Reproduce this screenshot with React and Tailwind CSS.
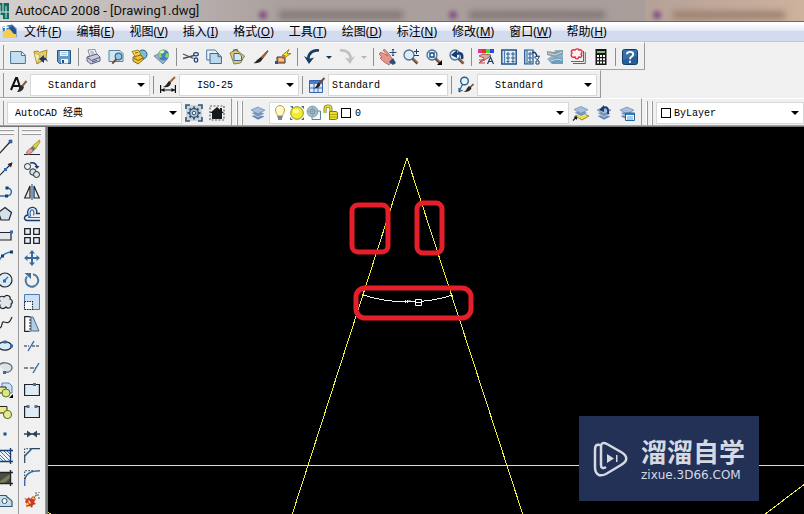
import React from "react";

function Icon({ children, size = "size-4" }) {
  return (
    <svg viewBox="0 0 16 16" className={`${size} shrink-0 overflow-visible`} fill="none" aria-hidden="true">
      {children}
    </svg>
  );
}

const navy = "#173d70";
const blue = "#2f6db0";
const ink = "#20242c";

const brush = (
  <>
    <path d="M15.5 1.5 9 8.2l1.6 1.5L16 2.5z" fill="#a8623a" stroke="#5b2d15" strokeWidth=".6" />
    <path d="M8.9 8 6 10.3C4 12 3.6 13 1.5 14c3.4.6 6.5-.4 7.6-2l1.7-2.3z" fill="#262626" />
  </>
);

const stack = (
  <>
    <path d="m1 11 7 4 7-3.5-7-3z" fill="#6485ae" stroke="#f4f7fb" strokeWidth=".6" />
    <path d="m1 8 7 4 7-3.5-7-3z" fill="#7797bd" stroke="#f4f7fb" strokeWidth=".6" />
    <path d="m1 5 7 4 7-3.8-7-3.2z" fill="#a7bfda" stroke="#5b7ca6" strokeWidth=".6" />
  </>
);

const lens = (
  <>
    <path d="m9.5 9.5 5 5" stroke="#5d4030" strokeWidth="2.6" />
    <path d="m10 9.5 4.5 4.5" stroke="#c99362" strokeWidth="1" />
    <circle cx="6" cy="6" r="5" fill="#dcebf7" stroke="#4b7194" strokeWidth="1.3" />
  </>
);

const art = {
  new: (
    <path d="M.6 2.5h11l3.8 3.8v8.2H.6zM11.4 2.5v4h4" fill="#c5dff0" stroke="#46789f" strokeWidth="1" />
  ),
  open: (
    <>
      <path d="M1 2.5 5 2l1.5 1.5L14 1l-1 9-9 5z" fill="#e9cf62" stroke="#8d7527" strokeWidth=".8" />
      <path d="m1 3.5 6 3L4 15z" fill="#f8eba6" stroke="#a38931" strokeWidth=".6" />
      <path d="m6 10 5-4v2.5c2 0 3 2 4 4.5-2-2-3-2-4-2V14z" fill={navy} />
    </>
  ),
  save: (
    <>
      <path d="M1.5 1.5h13v13h-11l-2-2z" fill="#669bc8" stroke="#285783" />
      <path d="M4 2h8v5H4zM5 10h7v4.5H5z" fill="#edf5fb" />
      <path d="M5 3.5h6M5 5.5h6" stroke="#8caac5" strokeWidth=".7" />
      <path d="M6 11h2v3H6z" fill="#244e7a" />
    </>
  ),
  print: (
    <>
      <path d="m3 1 7-.5 2 6-7 1.5z" fill="#fff" stroke="#686d91" strokeWidth=".8" />
      <path d="M5 3h4M5.5 5H10" stroke="#858ab0" />
      <path d="m2 8 10-3 3 3v4l-9 3-4-3z" fill="#c9cbdf" stroke="#4e5377" strokeWidth=".9" />
      <path d="m2.5 8.5 4 3 8-3M7 13l5-1.6" stroke="#4e5377" />
    </>
  ),
  preview: (
    <>
      <path d="M1 1.5h11l3 3v8H1z" fill="#d1e6f3" stroke="#5684a5" />
      <path d="m8.3 10.3-4 4.3" stroke="#704b35" strokeWidth="2" />
      <circle cx="10.5" cy="7.5" r="3.3" fill="#9ac5e5" stroke="#35698f" strokeWidth="1.2" />
    </>
  ),
  publish: (
    <>
      <circle cx="11.5" cy="5.5" r="4.5" fill="#80bad5" stroke="#245d85" />
      <path d="M1 2.5 7 1l3 4-5 4z" fill="#f6d44c" stroke="#8a6c11" strokeWidth=".8" />
      <path d="m2 8 8-2 3 4-6 5-5-3z" fill="#efc432" stroke="#76601b" strokeWidth=".9" />
      <path d="m3 9 4 2.5 5-2.5M4 4l3-.5" stroke="#58460d" strokeWidth=".8" />
    </>
  ),
  web: (
    <>
      <path d="m0 7 6-3 8 5-5 6z" fill="#9db4cf" stroke="#506b91" strokeWidth=".7" />
      <circle cx="9.5" cy="6" r="5.5" fill="#3c82c4" />
      <path d="M5 3c2-2 4-3 6-2l-1 3-3 1 1 3-3 1C4 6 4 5 5 3zM12 4l3 1-1 4-3-1z" fill="#9ccd5d" />
      <ellipse cx="8" cy="3" rx="2" ry="1.2" fill="#f3fbe2" opacity=".8" />
    </>
  ),
  cut: (
    <>
      <path d="m0 5 10.5 4.5M0 9.5 11 6.5" stroke="#48515f" strokeWidth="1.3" />
      <ellipse cx="13" cy="5.3" rx="2.3" ry="1.6" stroke="#253f72" strokeWidth="1.2" />
      <ellipse cx="13" cy="11" rx="1.7" ry="2.2" stroke="#253f72" strokeWidth="1.2" />
    </>
  ),
  copy: (
    <>
      <path d="M.7 1h8.5L12 4v7H.7z" fill="#e6f1f8" stroke="#4d7ca3" />
      <path d="M4 4.5h8l3.4 3.2v6.8H4zM12 4.5v3.2h3.4" fill="#bddaed" stroke="#376b95" />
    </>
  ),
  paste: (
    <>
      <path d="M1 4 7 .8 15.5 7l-4 7L5 15z" fill="#ddcc77" stroke="#87752f" strokeWidth=".9" />
      <path d="m4 2.8 1-2 3-.3 1 2" stroke="#697384" strokeWidth="1.3" />
      <path d="M5 4.5h5l2.5 2.3v4.7H5z" fill="#d4e8f4" stroke="#3a6893" />
    </>
  ),
  brush,
  blockedit: (
    <>
      <path d="M2 8h8v6H2z" fill="#f2904e" stroke="#353535" />
      <path d="M4 9h5v3H4z" fill="#ffc296" />
      <path d="M14 .5 7 6.5h3L7.5 10 16 4.5h-4z" fill="#ffdf31" stroke="#8d6e09" strokeWidth=".8" />
      <path d="M0 12h3v3H0z" fill="#125ca5" />
    </>
  ),
  undo: (
    <>
      <path d="M15 1.5C9 .5 4.5 4 4.2 10" stroke="#173c66" strokeWidth="2.7" />
      <path d="m0 7 5 8 5-6.5-4.5 1.2z" fill="#173c66" />
    </>
  ),
  redo: (
    <>
      <path d="M1 1.5C7 .5 11.5 4 11.8 10" stroke="#c1c1c1" strokeWidth="2.7" />
      <path d="m16 7-5 8-5-6.5 4.5 1.2z" fill="#c1c1c1" />
    </>
  ),
  pan: (
    <>
      <path d="m1 3 7 4-5-6 2-.5 5 5.500 3 6-4 4-5-3-4-4 2-1-3-3z" fill="#e6958a" stroke="#9e554f" strokeWidth=".7" />
      <path d="m9 13 4-4 3 5-3 2z" fill="#2b4f7d" />
      <path d="M13 0v7M9.5 3.5h7M12 1.2 13 0l1 1.2M12 5.8 13 7l1-1.2" stroke="#234d79" />
    </>
  ),
  zoom: (
    <>
      {lens}
      <path d="M13.5 0v5M11 2.5h5M11 6.5h5" stroke={navy} />
    </>
  ),
  zoomwin: (
    <>
      {lens}
      <path d="M4 4h4v4H4z" fill="#fff" stroke="#174d88" strokeWidth="1.4" />
      <path d="M16 11v5h-5z" fill="#000" />
    </>
  ),
  zoomprev: (
    <>
      {lens}
      <path d="M13 10c1-5-1-7-5-5" stroke={navy} strokeWidth="2.5" />
      <path d="m2 6 6-5v8z" fill={navy} />
    </>
  ),
  properties: (
    <>
      <path d="M0 0h4v4H0z" fill="#ed2ca7" />
      <path d="M4 0h4v4H4z" fill="#f12c25" />
      <path d="M8 0h4v4H8z" fill="#49df39" />
      <path d="M12 0h4v4h-4z" fill="#2a46e3" />
      <path d="m1 7 4-2 8 1-3 3-9 5 5-5z" fill="#eaa49b" stroke="#7d3939" strokeWidth=".7" />
      <path d="M1 11h6M1 14h6" stroke="#ce3847" strokeWidth="1.2" />
      <path d="m9.5 15 3-7 3 7M10.5 12.5h4" stroke={navy} strokeWidth="1.2" />
    </>
  ),
  center: (
    <>
      <path d="M.8 1h14.4v14H.8z" fill="#e2effb" stroke="#1d5285" strokeWidth="1.4" />
      <path d="M3.5 1.5v13" stroke="#4f7fac" strokeWidth="1.2" />
      <path d="M6 4h2v2H6zM11 4h2v2h-2zM6 8h2v2H6zM11 8h2v2h-2zM6 12h2v1H6zM11 12h2v1h-2z" stroke="#214f7b" strokeWidth=".9" />
    </>
  ),
  palettes: (
    <>
      <path d="M.7 1H9v14H.7z" fill="#d9eafa" stroke="#1d5285" strokeWidth="1.2" />
      <path d="M3 1v14M5 4h2v2H5zM5 8h2v2H5zM5 12h2v2H5z" stroke="#315f8e" />
      <path d="M8 4c3-2 5 1 5 5" stroke={navy} strokeWidth="1.5" />
      <path d="m10.5 8 3 3 2-4zM12 12h3v3h-3z" fill="#fff" stroke={navy} />
    </>
  ),
  sheets: (
    <>
      <path d="M8 1h8v14H5L0 10l6-4z" fill="#8fb3c8" />
      <path d="m0 2 7 1 9-2v4L8 8 0 6z" fill="#8d9ba4" />
      <path d="m3 12 6-4 7 1v6H5z" fill="#6d9fbd" />
      <path d="m1 4 7 2 7-3M4 12l6-2 5 1" stroke="#dfe9ee" strokeWidth=".8" />
    </>
  ),
  markup: (
    <>
      <path d="M3 14.5h12.3V3M1 12.5h12.5V2" stroke="#536879" />
      <path d="M2 4c-2-2 1-4 3-3 2-2 4-1 4 0 3-1 4 2 2 4 2 2 0 4-2 3-1 3-4 2-4 0C2 9 0 7 2 4z" fill="#fff1f2" stroke="#e02f49" strokeWidth="1.4" />
    </>
  ),
  calc: (
    <>
      <path d="M2.5 0h11v16h-11z" fill="#161616" />
      <path d="M4 2h8v2H4z" fill="#85bb76" />
      <path d="M4 6h2v2H4zM7 6h2v2H7zM10 6h2v2h-2zM4 9.3h2v2H4zM7 9.3h2v2H7zM10 9.3h2v2h-2zM4 12.6h2v2H4zM7 12.6h2v2H7zM10 12.6h2v2h-2z" fill="#fff" />
    </>
  ),
  help: (
    <>
      <rect x=".5" y=".5" width="15" height="15" rx="2" fill="#245f9c" stroke="#143b67" />
      <path d="M1 1h14v6L1 11z" fill="#417bb0" opacity=".6" />
      <path d="M5 5.2C5 2.2 11.2 2 11.2 5.4 11.2 7.6 8 7.6 8 10.2M8 11.7v2" stroke="#fff" strokeWidth="1.9" />
    </>
  ),
  textstyle: (
    <>
      <path d="m0 13 5-12h1l4 12M2 9h6" stroke="#111" strokeWidth="2" />
      <path d="m15.5 4-5 6" stroke="#8b5b3b" strokeWidth="2" />
      <path d="m10 8 3 2c-1 4-4 5-7 5 2-2 2-5 4-7z" fill="#2b2b2b" />
    </>
  ),
  dimstyle: (
    <>
      <path d="M.6 8v8M15.4 8v8M1 13h14" stroke="#111" strokeWidth="1.2" />
      <path d="m1 13 3.5-2v4zm14 0-3.5-2v4z" fill="#111" />
      <path d="m15 0-6 6" stroke="#a0653e" strokeWidth="2" />
      <path d="m9 4 2 2c-1 4-4 5-8 4 3-1 4-4 6-6z" fill="#242424" />
    </>
  ),
  tablestyle: (
    <>
      <path d="M.5 3.5h13v12H.5z" fill="#dce9fd" stroke="#3265ae" />
      <path d="M1 4h12v3H1z" fill="#4a7acb" />
      <path d="M1 11h12M5 7v8M9 7v8" stroke="#3e70b8" />
      <path d="m15.5 1-6 6" stroke="#744b2e" strokeWidth="2" />
      <path d="m9.5 5.5 2 2c-1 3-4 4-7 4 3-1 3-4 5-6z" fill="#222" />
    </>
  ),
  leaderstyle: (
    <>
      <circle cx="6.5" cy="4" r="3.8" fill="#e9f3fb" stroke="#255f91" strokeWidth="1.4" />
      <path d="M4.5 7.5 1.2 14M1 15v-4M1 15l3.5-2" stroke="#255f91" strokeWidth="1.2" />
      <path d="m15.5 7-4 4" stroke="#755034" strokeWidth="1.7" />
      <path d="m11 9 2.5 2c-1 3-4 4-8 4 3-1 3-4 5.5-6z" fill="#2a2a2a" />
    </>
  ),
  gear: (
    <>
      <path d="M0 0h16v16H0z" fill="#90a9bc" opacity=".4" />
      <path d="M0 4V0h4M12 0h4v4M0 12v4h4M12 16h4v-4" stroke="#315574" strokeWidth="1.6" />
      <path d="M8 1.5v13M1.5 8h13M3.500 3.500l9 9M12.500 3.500l-9 9" stroke="#375a7c" strokeWidth="2" />
      <circle cx="8" cy="8" r="4.3" fill="#b8cada" stroke="#31516f" strokeWidth="1.3" />
      <circle cx="8" cy="8" r="1.8" fill="#f7f9fb" stroke="#31516f" />
    </>
  ),
  house: (
    <>
      <path d="M1 1h14v14H1z" stroke="#57636c" strokeWidth="1.2" strokeDasharray="2 1.5" />
      <path d="M1 8 8 2l7 6h-2v6H3V8z" fill="#171a1c" />
      <path d="M11 3h2v4h-2z" fill="#171a1c" />
    </>
  ),
  layers: stack,
  bulb: (
    <>
      <path d="M5.500 11c0-2-2-3-2-6a4.500 4.500 0 0 1 9 0c0 3-2 4-2 6z" fill="#fffaca" stroke="#b8a12f" />
      <path d="M5.5 12h5M6 14h4" stroke="#596072" strokeWidth="1.5" />
      <path d="M6 4c0-1 1-1.5 2-1.5" stroke="#fff" strokeWidth="1.5" />
    </>
  ),
  sun: (
    <>
      <path d="M1 1h3v3zM15 1v3l-3-3zM1 15v-3l3 3zM15 15h-3l3-3z" fill="#4c6a80" />
      <circle cx="8" cy="8" r="6.3" fill="#f4ec27" stroke="#8a902c" />
      <ellipse cx="7" cy="6" rx="3" ry="2.3" fill="#fffca0" />
    </>
  ),
  viewport: (
    <>
      <path d="M6 6h8.500v8.500H6z" fill="#f3f8fb" stroke="#59819b" />
      <circle cx="6.500" cy="6.500" r="5.400" fill="#a6bdc5" stroke="#7f9ba6" />
      <circle cx="6.500" cy="6.500" r="2.500" stroke="#6f909f" />
      <path d="M6.500 2v9M2 6.500h9" stroke="#86a3b0" strokeWidth=".8" />
    </>
  ),
  lock: (
    <>
      <path d="M2 8V4c0-4 6-4 6 0v3" stroke="#827c15" strokeWidth="3" />
      <path d="M2 8V4c0-4 6-4 6 0v3" stroke="#f1e94a" strokeWidth="1.3" />
      <path d="M6.500 6.500h6.500l1.500 1v6l-2 1h-6z" fill="#e9df27" stroke="#7d7a19" />
      <path d="M7 9.500h7M7 12h7" stroke="#b4aa15" />
    </>
  ),
  layercurrent: (
    <>
      <path d="m2 11 7 4 7-4-7-3z" fill="#e9d94b" stroke="#86791c" strokeWidth=".8" />
      <path d="m1 7.500 7 4 7-3.500-7-3z" fill="#7797bd" stroke="#f4f7fb" strokeWidth=".6" />
      <path d="m1 4.500 7 4 7-3.800-7-3.200z" fill="#a7bfda" stroke="#5b7ca6" strokeWidth=".6" />
      <path d="m0 15.500 3.500-3.500M1 12h2.500v2.500" stroke="#111" strokeWidth="1.1" />
    </>
  ),
  layerprev: (
    <>
      {stack}
      <path d="M12 9c1-5-1-8-5-6" stroke={navy} strokeWidth="2" />
      <path d="m3 5 5-5v7z" fill={navy} />
    </>
  ),
  layerstates: (
    <>
      {stack}
      <path d="M6.5 8h9v7.5h-9z" fill="#f8fbff" stroke="#1d65a5" />
      <path d="M7 8h8v2H7z" fill="#337ab9" />
      <path d="M8 12h6M8 14h6" stroke="#6898c5" />
    </>
  ),
  line: (
    <>
      <path d="M1 15 13 2" stroke={ink} strokeWidth="1.2" />
      <path d="M12 0h3v3h-3z" fill={blue} stroke={navy} strokeWidth=".5" />
    </>
  ),
  xline: (
    <>
      <path d="M1 15 15 1" stroke={ink} strokeWidth="1.2" />
      <path d="m15.5.5-1.5 5L10.500 2z" fill={ink} />
      <path d="M7 6h3v3H7z" fill={blue} />
    </>
  ),
  pline: (
    <>
      <path d="M1 12h8c7 0 7-8 1-8" stroke={blue} strokeWidth="1.5" />
      <path d="M8.5 2.5h3v3h-3zM8 10.5h3v3H8z" fill={navy} />
    </>
  ),
  polygon: <path d="M8 1.5 14.500 6.500 12 14H4L1.500 6.500z" fill="#d3e1eb" stroke={ink} strokeWidth="1.2" />,
  rect: (
    <>
      <path d="M0 4.500h14V12H0z" fill="#e1e7ed" stroke={ink} strokeWidth="1.2" />
      <path d="M13 2.500h3v3h-3zM0 11h3v3H0z" fill={blue} />
    </>
  ),
  arc: (
    <>
      <path d="M1 16C1 9 7 2 15 2" stroke={blue} strokeWidth="1.4" />
      <path d="M13 .5h3v3h-3zM4 4.500h3v3H4z" fill={navy} />
    </>
  ),
  circle: (
    <>
      <circle cx="8" cy="8" r="7" fill="#dcecf5" stroke={ink} strokeWidth="1.2" />
      <path d="m7 9 4-4" stroke={blue} strokeWidth="1.3" />
      <path d="M6 7.500h3v3H6z" fill={blue} />
    </>
  ),
  cloud: (
    <path d="M3 7c-3-3 1-6 4-4 3-3 7-1 6 2 3 1 3 4 1 5 1 4-3 5-5 3-3 3-7 1-6-2-2-1-2-3 0-4z" fill="#dee5eb" stroke={ink} strokeWidth="1.2" />
  ),
  spline: <path d="M0 13c8-1 3-8 7-7 4 1 5 2 8-5" stroke={ink} strokeWidth="1.2" />,
  ellipse: (
    <>
      <ellipse cx="8" cy="8" rx="6.5" ry="4.2" fill="#d6ecf7" stroke={ink} strokeWidth="1.3" />
      <path d="M13 6.500h3v3h-3zM6.500 2.500h3v3h-3z" fill={blue} />
    </>
  ),
  earc: (
    <>
      <path d="M2 5c4-4 13-2 13 3 0 3-4 5-7 4" fill="#dce2e8" stroke="#6a7481" strokeWidth="1.4" />
      <path d="M6 11h3v3H6z" fill={blue} />
    </>
  ),
  insert: (
    <>
      <path d="M5 1h7l3 3v7H5z" fill="#cce0f1" stroke="#5b81ad" />
      <path d="M0 5h9v6H0z" fill="#ebe695" stroke={ink} />
      <circle cx="9" cy="11" r="4" fill="#d9e785" stroke="#5c7523" />
      <path d="M16 12v4h-4z" fill="#000" />
    </>
  ),
  make: (
    <>
      <path d="M1 2.500h9V9H1z" fill="#f1e87f" stroke={ink} />
      <circle cx="10.500" cy="10.500" r="4" fill="#e5ea98" stroke="#68782f" strokeWidth="1.2" />
      <path d="M0 8h3v3H0z" fill={blue} />
    </>
  ),
  point: <path d="M6.500 6.500h3v3h-3z" fill="#164f8b" />,
  hatch: (
    <>
      <path d="M2 2h11v11H2z" fill="#eff6fb" />
      <path d="M3 3l10 10M3 7l6 6M7 3l6 6M3 10l3 3M10 3l3 3" stroke="#4476a0" />
      <path d="M2 0v16M13.500 0v16M0 2.500h16M0 13.500h16" stroke={navy} strokeWidth="1.4" />
    </>
  ),
  gradient: (
    <>
      <path d="M2 2h12v12H2z" fill="#4a5045" />
      <path d="m2 12 11-8v4l-7 6H2z" fill="#7d7d55" />
      <path d="M2 0v16M13.500 0v16M0 2.500h16M0 13.500h16" stroke={ink} strokeWidth="1.4" />
    </>
  ),
  region: (
    <>
      <path d="M1 3.500h8c1 3 5 3 6 6v5H1z" fill="#c6ddec" stroke="#34556e" strokeWidth="1.2" />
      <circle cx="7.500" cy="9" r="2.500" fill="#fff" stroke="#34556e" />
    </>
  ),
  erase: (
    <>
      <path d="M0 14.500h16" stroke={ink} />
      <path d="m15.500 0-7 6 3 3 4.500-7z" fill="#e7cf38" stroke="#796716" strokeWidth=".6" />
      <path d="m8.500 6-2 2 3 3 2-2z" fill="#5f7e67" />
      <path d="m6.500 8-4 4c0 2 2 3 3 2l4-3z" fill="#ea9f9d" stroke="#8b4848" strokeWidth=".7" />
    </>
  ),
  duplicate: (
    <>
      <circle cx="3.500" cy="4.500" r="3" stroke={ink} />
      <circle cx="9" cy="10" r="3.200" fill="#dce4eb" stroke={ink} />
      <circle cx="12.500" cy="12.500" r="3" fill="#dce4eb" stroke={ink} />
      <path d="M6 1c4-1 6 0 7 4" stroke={navy} strokeWidth="1.6" />
      <path d="M10.500 4h5L13 7z" fill={navy} />
    </>
  ),
  mirror: (
    <>
      <path d="M6 2v12H.7zM10 2v12h5.300z" fill="#e4e9ed" stroke={ink} strokeWidth="1.2" />
      <path d="M8 0v16" stroke={blue} strokeWidth="1.3" />
    </>
  ),
  offset: (
    <>
      <path d="M16 14.500H3c-4-1-3-5 1-5.500C1-1 15-1 12.500 7.500H16" stroke={navy} strokeWidth="1.3" />
      <path d="M16 11.500H5c-1 0-1-1 1.500-1.500C4 2 12 2 9.500 9.500" stroke={blue} strokeWidth="1.2" />
    </>
  ),
  array: <path d="M.7.7h5.600v5.600H.7zM9.700.7h5.600v5.600H9.700zM.7 9.700h5.600v5.600H.7zM9.700 9.700h5.600v5.600H9.700z" fill="#e5edf4" stroke={ink} strokeWidth="1.3" />,
  move: <path d="m8 0 3 3.500H9V7h3.500V5L16 8l-3.500 3V9H9v3.500h2L8 16l-3-3.500h2V9H3.500v2L0 8l3.500-3v2H7V3.500H5z" fill="#3a6b9f" />,
  rotate: (
    <>
      <path d="M9 2.200a6.300 6.300 0 1 1-6 2.300" stroke="#4b789f" strokeWidth="2" />
      <path d="M.5 1H7v6z" fill="#416d98" />
    </>
  ),
  scale: (
    <>
      <path d="M.5.5h15v15H.5z" fill="#cee0f5" stroke="#4e7aac" />
      <path d="M.5 7.500h8v8h-8z" fill="#f8fafc" stroke={ink} strokeWidth="1.1" strokeDasharray="1.500 1" />
    </>
  ),
  stretch: (
    <>
      <path d="M5.500.7H.7v14.600h4.800" fill="#fff" stroke={ink} strokeWidth="1.2" />
      <path d="M7 1h2l6 14H7z" fill="#b5cce3" stroke="#436d94" />
      <path d="M6 0v16" stroke={ink} strokeDasharray="2 1" />
    </>
  ),
  trim: (
    <>
      <path d="M0 8h5M8 8h8" stroke={ink} strokeWidth="1.2" strokeDasharray="3 1" />
      <path d="m4 13 6-10" stroke={blue} strokeWidth="1.4" />
    </>
  ),
  extend: (
    <>
      <path d="M0 8h5M6 8h6" stroke={ink} strokeWidth="1.2" strokeDasharray="4 1" />
      <path d="m9 13 6-10" stroke={blue} strokeWidth="1.4" />
    </>
  ),
  breakpoint: (
    <>
      <path d="M.6 2.500h14.800v11H.6z" fill="#dfebf5" stroke={ink} strokeWidth="1.2" />
      <path d="M9 1h3v3H9z" fill="#51728f" />
    </>
  ),
  break: (
    <>
      <path d="M4 2.500H.6v11h14.800v-11H12" fill="#dfebf5" stroke={ink} strokeWidth="1.2" />
      <path d="M2.500 1h3v3h-3zM10.500 1h3v3h-3z" fill="#51728f" />
    </>
  ),
  join: (
    <>
      <path d="M0 8h16" stroke={ink} strokeWidth="1.3" />
      <path d="m3 4.500 5 3.500-5 3.500zM13 4.500 8 8l5 3.500z" fill="#27455f" />
    </>
  ),
  chamfer: (
    <>
      <path d="M.7 15V8l7-7.300H16" stroke="#27455f" strokeWidth="1.2" />
      <path d="M.7 8V.7h7" stroke={ink} strokeDasharray="1.500 1.500" />
      <path d="m.7 8 7-7" stroke={blue} strokeWidth="1.4" />
    </>
  ),
  fillet: (
    <>
      <path d="M.7 16v-5C1 4 6 .7 16 .7" stroke={blue} strokeWidth="1.4" />
      <path d="M.7 9V.7h9" stroke={ink} strokeDasharray="1.500 1.500" />
    </>
  ),
  explode: (
    <>
      <path d="m0 6 3 1 2-2 1 2 3-3 3 3-2 3 2 2-3 1-1 3-2-2-4 1 1-3-2-2 1-2z" fill="#c93a22" />
      <path d="m1 13 3-3 1 3zM7 6l3-1 1 3z" fill="#ffc43b" />
      <path d="m4 8 2 1 1 3-2-1z" fill="#f6d9b4" />
      <path d="m10 6 2-3h3M12 0v2M15 0v1M15 5v2" stroke="#4b5863" />
    </>
  ),
};

function Tool({ name, width = "w-[23px]" }) {
  return (
    <button type="button" aria-label={name} className={`flex h-[22px] ${width} shrink-0 items-center justify-center`}>
      <Icon>{art[name]}</Icon>
    </button>
  );
}

function Caret() {
  return (
    <svg viewBox="0 0 8 4" className="h-1 w-2 shrink-0 fill-black" aria-hidden="true">
      <path d="M0 0h8L4 4z" />
    </svg>
  );
}

function Separator() {
  return <div className="ml-[3px] mr-[2px] h-[18px] w-px shrink-0 bg-[#8e8e8e]" />;
}

function Grip() {
  return (
    <div className="mr-[3px] flex h-6 shrink-0 gap-[3px]">
      <div className="w-[2px] border-r border-[#999] bg-white" />
      <div className="w-[2px] border-r border-[#999] bg-white" />
    </div>
  );
}

function Bar({ children, className = "" }) {
  return (
    <div className={`flex h-7 items-center border-b border-t border-b-[#a3a3a3] border-t-white pt-[2px] ${className}`}>
      {children}
    </div>
  );
}

const mono = "font-['Liberation_Mono','Noto_Sans_CJK_SC',monospace]";

function Combo({ label, value, width, pad = "pl-[18px]", before = null }) {
  return (
    <div className={`relative flex h-[22px] items-center border border-[#d8d8d8] bg-white ${width}`}>
      {before}
      <select
        aria-label={label}
        defaultValue={value}
        className={`h-full min-w-0 flex-1 appearance-none bg-transparent text-[10px] text-black ${mono} ${pad} pr-4`}
      >
        <option>{value}</option>
      </select>
      <span className="pointer-events-none absolute right-1 flex">
        <Caret />
      </span>
    </div>
  );
}

const menus = [
  ["文件", "F"], ["编辑", "E"], ["视图", "V"], ["插入", "I"], ["格式", "O"], ["工具", "T"],
  ["绘图", "D"], ["标注", "N"], ["修改", "M"], ["窗口", "W"], ["帮助", "H"],
];

const drawTools = [
  "line", "xline", "pline", "polygon", "rect", "arc", "circle", "cloud", "spline",
  "ellipse", "earc", "insert", "make", "point", "hatch", "gradient", "region",
];

const modifyTools = [
  "erase", "duplicate", "mirror", "offset", "array", "move", "rotate", "scale", "stretch",
  "trim", "extend", "breakpoint", "break", "join", "chamfer", "fillet", "explode",
];

function TitleBar() {
  return (
    <header className="flex h-[21px] items-center overflow-hidden bg-linear-to-r from-[#d4d0ce] from-0% via-[#aaa09e] via-35% to-[#a99c99]">
      <svg viewBox="0 0 10 16" className="ml-[-1px] h-4 w-[10px] shrink-0" aria-hidden="true">
        <path d="M0 0h10v16H0z" fill="#17695f" />
        <path d="M1 2v10M4 0v9M7 3v12M0 9h10" stroke="#cdeee4" strokeWidth="1" />
        <path d="M0 12h4v4H0z" fill="#b7d9cf" />
      </svg>
      <h1 className="ml-[6px] w-[194px] shrink-0 whitespace-nowrap font-[Roboto,'Noto_Sans_CJK_SC',sans-serif] text-[13px] leading-4 text-[#111]">
        AutoCAD 2008 - [Drawing1.dwg]
      </h1>
      <div className="ml-[50px] flex h-full flex-1 items-center" aria-hidden="true">
        <div className="mt-2 size-2 shrink-0 rounded-full bg-[#80517f] blur-[2px]" />
        <div className="ml-3 mt-2 h-2 w-[124px] shrink-0 bg-[#827876] blur-[3px]" />
        <div className="ml-[46px] mt-2 size-2 shrink-0 rounded-full bg-[#80517f] blur-[2px]" />
        <div className="ml-3 mt-2 h-2 w-[136px] shrink-0 bg-[#827876] blur-[3px]" />
        <div className="ml-10 flex h-full flex-1 items-center bg-linear-to-r from-[#b5a198] to-[#cdb29d]">
          <div className="ml-2 mt-2 size-2 shrink-0 rounded-full bg-[#80517f] blur-[2px]" />
          <div className="ml-3 mt-2 h-2 w-[112px] shrink-0 bg-[#9c8170] blur-[3px]" />
        </div>
      </div>
    </header>
  );
}

function MenuBar() {
  return (
    <nav className="flex h-[21px] items-center gap-[15px] border-b border-t border-b-[#c4c7d2] border-t-[#6d686a] bg-linear-to-b from-white from-10% via-[#e6eaf6] via-45% to-[#d3dbee] to-50% pl-[2px] font-['Noto_Sans','Noto_Sans_CJK_SC',sans-serif] text-[12px] leading-4 text-black">
      <svg viewBox="0 0 16 16" className="mr-[-8px] size-[15px] shrink-0" aria-hidden="true">
        <path d="M1 3 11 1l4 4v9H2z" fill="#347cc3" stroke="#214b78" strokeWidth=".7" />
        <path d="m1 8 6-3 8 6v4H1z" fill="#f3cf4f" />
        <path d="m8 4 3-2 4 5v4l-3-1z" fill="#254f90" />
        <path d="M4 0v7M1 3.500h6" stroke="#fff" strokeWidth="1.5" />
      </svg>
      {menus.map(([name, key]) => (
        <button key={key} type="button" className="shrink-0 whitespace-nowrap">
          {name}(<span className="underline">{key}</span>)
        </button>
      ))}
    </nav>
  );
}

function StandardBar() {
  const tools = (names) => names.map((n) => <Tool key={n} name={n} />);
  return (
    <Bar className="w-fit border-r border-r-[#999] pr-[3px]">
      <div className="mr-[2px] h-full w-1 shrink-0 border-r border-[#999]" />
      {tools(["new", "open", "save"])}
      <Separator />
      {tools(["print", "preview", "publish", "web"])}
      <Separator />
      {tools(["cut", "copy", "paste", "brush", "blockedit"])}
      <Separator />
      <Tool name="undo" />
      <button type="button" aria-label="undo list" className="flex h-5 w-3 items-center justify-center">
        <svg viewBox="0 0 6 3" className="h-[3px] w-[6px] fill-[#15335e]"><path d="M0 0h6L3 3z" /></svg>
      </button>
      <Tool name="redo" />
      <button type="button" aria-label="redo list" className="flex h-5 w-3 items-center justify-center">
        <svg viewBox="0 0 6 3" className="h-[3px] w-[6px] fill-[#b5b5b5]"><path d="M0 0h6L3 3z" /></svg>
      </button>
      <Separator />
      {tools(["pan", "zoom", "zoomwin", "zoomprev"])}
      <Separator />
      {tools(["properties", "center", "palettes", "sheets", "markup", "calc"])}
      <Separator />
      <Tool name="help" />
    </Bar>
  );
}

function StylesBar() {
  return (
    <Bar className="w-fit border-r border-r-[#999] pr-[3px]">
      <div className="mr-[3px] h-full w-1 shrink-0 border-r border-[#999]" />
      <Tool name="textstyle" />
      <Combo label="Text style" value="Standard" width="w-[120px]" pad="pl-[17px]" />
      <Separator />
      <Tool name="dimstyle" />
      <Combo label="Dimension style" value="ISO-25" width="w-[120px]" pad="pl-[17px]" />
      <Separator />
      <Tool name="tablestyle" />
      <Combo label="Table style" value="Standard" width="w-[120px]" pad="pl-[3px]" />
      <Separator />
      <Tool name="leaderstyle" />
      <Combo label="Leader style" value="Standard" width="w-[120px]" pad="pl-[17px]" />
    </Bar>
  );
}

function LayersBar() {
  return (
    <div className="flex border-b border-[#777]">
      <Bar className="shrink-0 border-r border-r-[#999] pr-[3px]">
        <div className="mr-[3px] h-full w-1 shrink-0 border-r border-[#999]" />
        <Combo label="Workspace" value="AutoCAD 经典" width="w-[175px]" pad="pl-[7px]" />
        <Tool name="gear" />
        <Tool name="house" />
      </Bar>
      <Bar className="shrink-0 border-r border-r-[#999] pl-1 pr-[3px]">
        <Grip />
        <Tool name="layers" />
        <Combo
          label="Layer"
          value="0"
          width="w-[300px]"
          pad="pl-[4px]"
          before={
            <div className="flex items-center gap-[1px] pl-[2px]">
              <Icon>{art.bulb}</Icon>
              <Icon>{art.sun}</Icon>
              <Icon>{art.viewport}</Icon>
              <Icon>{art.lock}</Icon>
              <span className="ml-[1px] size-[10px] border border-black bg-white" />
            </div>
          }
        />
        <Tool name="layercurrent" />
        <Tool name="layerprev" />
        <Tool name="layerstates" />
      </Bar>
      <Bar className="min-w-0 flex-1 pl-1">
        <Grip />
        <Combo
          label="Color"
          value="ByLayer"
          width="min-w-0 flex-1"
          pad="pl-[3px]"
          before={<span className="ml-1 size-[10px] shrink-0 border border-black bg-white" />}
        />
      </Bar>
    </div>
  );
}

function SideBar({ names, className, label }) {
  return (
    <aside aria-label={label} className={`flex shrink-0 flex-col items-end overflow-hidden border-r border-[#999] pt-[2px] ${className}`}>
      <div className="mb-[2px] flex w-full flex-col gap-[2px] pr-[2px]">
        <div className="h-[2px] w-full border-b border-[#999] bg-white" />
        <div className="h-[2px] w-full border-b border-[#999] bg-white" />
      </div>
      {names.map((n) => (
        <Tool key={n} name={n} width="w-[22px]" />
      ))}
    </aside>
  );
}

function Watermark() {
  return (
    <div className="absolute bottom-[13px] right-[45px] flex h-[85px] w-[180px] items-center bg-[#243157] pl-[14px] text-[#d5d9e4]">
      <svg viewBox="0 0 36 38" className="h-[38px] w-9 shrink-0" fill="none" aria-hidden="true">
        <path d="M7 5C3 4 2 6 2 10v17c0 8 5 10 11 7l15-9c7-4 7-9 0-13L14 4c-4-2-6-1-6 3v18c0 3 2 4 5 2" stroke="#d5d9e4" strokeWidth="2.5" />
        <path d="m14 14 7 4.500-7 4.500zM23 15h1.500v7H23z" fill="#d5d9e4" />
      </svg>
      <div className="ml-3 flex flex-col gap-1 whitespace-nowrap">
        <span className="font-['Noto_Sans_CJK_SC',sans-serif] text-[26px] font-bold leading-7">溜溜自学</span>
        <span className="font-['DejaVu_Sans',sans-serif] text-[12px] leading-3">zixue.3D66.COM</span>
      </div>
    </div>
  );
}

function Canvas() {
  return (
    <main className="relative min-w-0 flex-1 overflow-hidden border-l-2 border-[#777] bg-black">
      <svg className="absolute inset-0 size-full" fill="none" aria-label="Drawing">
        <g stroke="#f0ee45" strokeWidth="1" shapeRendering="crispEdges">
          <path d="M244 388 359 31 475 388" />
          <path d="M0 338.500h2000" />
          <path d="m716 388 80-61M0 385l4 3" />
        </g>
        <path d="M315 168q45 14 90 0" stroke="#f4f4f4" strokeWidth="1" shapeRendering="crispEdges" />
        <path d="m357 173 3 3m0-3-3 3m3-2h3" stroke="#eee" />
        <path d="M367.500 172.500h6v6h-6z" fill="#000" stroke="#fff" />
        <path d="M368 175.500h5" stroke="#fff" />
        <g stroke="#e51f2a" strokeWidth="5">
          <rect x="304" y="78" width="36" height="47" rx="6" />
          <rect x="369" y="76" width="25" height="50" rx="6" />
          <rect x="308" y="161" width="115" height="30" rx="9" />
        </g>
      </svg>
      <Watermark />
    </main>
  );
}

export default function App() {
  return (
    <div className="flex h-screen flex-col overflow-hidden bg-[#f0f0f0]">
      <TitleBar />
      <MenuBar />
      <StandardBar />
      <StylesBar />
      <LayersBar />
      <div className="flex min-h-0 flex-1">
        <SideBar label="Draw" names={drawTools} className="w-[19px] pr-[2px]" />
        <SideBar label="Modify" names={modifyTools} className="w-[27px] pl-[3px] pr-[2px]" />
        <Canvas />
      </div>
    </div>
  );
}
